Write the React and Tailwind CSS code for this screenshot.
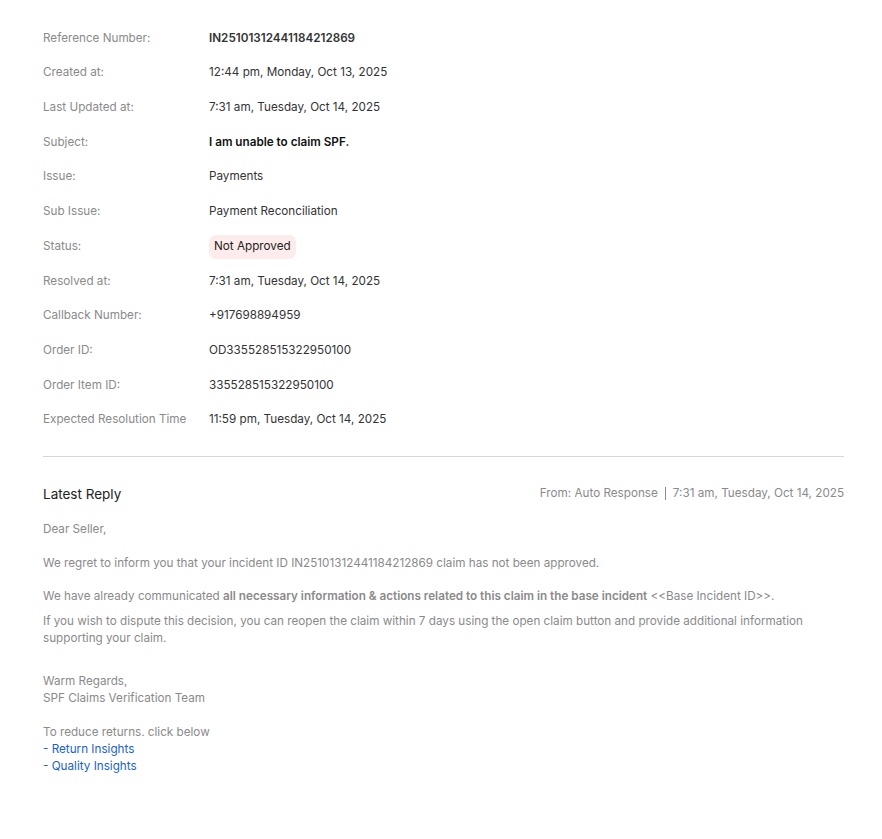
import React from "react";

const rows = [
  ["Reference Number:", "IN25101312441184212869", "bold"],
  ["Created at:", "12:44 pm, Monday, Oct 13, 2025"],
  ["Last Updated at:", "7:31 am, Tuesday, Oct 14, 2025"],
  ["Subject:", "I am unable to claim SPF.", "subject"],
  ["Issue:", "Payments"],
  ["Sub Issue:", "Payment Reconciliation"],
  ["Status:", "Not Approved", "badge"],
  ["Resolved at:", "7:31 am, Tuesday, Oct 14, 2025"],
  ["Callback Number:", "+917698894959"],
  ["Order ID:", "OD335528515322950100"],
  ["Order Item ID:", "335528515322950100"],
  ["Expected Resolution Time", "11:59 pm, Tuesday, Oct 14, 2025"],
];

function Value({ text, kind }) {
  if (kind === "bold") return <span className="font-semibold text-[#333333]">{text}</span>;
  if (kind === "subject") return <span className="font-semibold text-[#111111]">{text}</span>;
  if (kind === "badge")
    return (
      <span className="inline-flex h-[24px] items-center rounded-[7px] bg-[#fdeceb] px-[5px] text-[#222222]">
        {text}
      </span>
    );
  return <span className="text-[#333333]">{text}</span>;
}

export default function App() {
  return (
    <div
      className="min-h-[839px] w-full bg-white pl-[43px] pr-[38px] pt-[21px] text-[11.7px]"
      style={{ fontFamily: "Inter, 'Noto Sans', sans-serif" }}
    >
      <div className="flex flex-col">
        {rows.map(([label, value, kind]) => (
          <div key={label} className="flex h-[34.73px] items-center">
            <div className="w-[166px] text-[#8a8a8a]">{label}</div>
            <div>
              <Value text={value} kind={kind} />
            </div>
          </div>
        ))}
      </div>
      <div className="mt-[18px] border-t border-[#d6d6d6]" />
      <div className="mt-[27px] flex items-center justify-between">
        <div className="text-[13.5px] text-[#222222]">Latest Reply</div>
        <div className="flex items-center text-[#8a8a8a]">
          <span>From: Auto Response</span>
          <span className="mx-[7px] h-[13px] w-px bg-[#8a8a8a]" />
          <span>7:31 am, Tuesday, Oct 14, 2025</span>
        </div>
      </div>
      <div className="mt-[17px] leading-[16.8px] text-[#8a8a8a]">
        <p>Dear Seller,</p>
        <p className="mt-[17px]">
          We regret to inform you that your incident ID IN25101312441184212869 claim has not been approved.
        </p>
        <p className="mt-[17px]">
          We have already communicated{" "}
          <span className="font-semibold">
            all necessary information &amp; actions related to this claim in the base incident
          </span>{" "}
          &lt;&lt;Base Incident ID&gt;&gt;.
        </p>
        <p className="mt-[8px]">
          If you wish to dispute this decision, you can reopen the claim within 7 days using the open claim button and provide additional information supporting your claim.
        </p>
        <p className="mt-[26.5px]">Warm Regards,</p>
        <p>SPF Claims Verification Team</p>
        <p className="mt-[17px]">To reduce returns. click below</p>
        <p className="text-[#1a5fc9]">- Return Insights</p>
        <p className="text-[#1a5fc9]">- Quality Insights</p>
      </div>
    </div>
  );
}
